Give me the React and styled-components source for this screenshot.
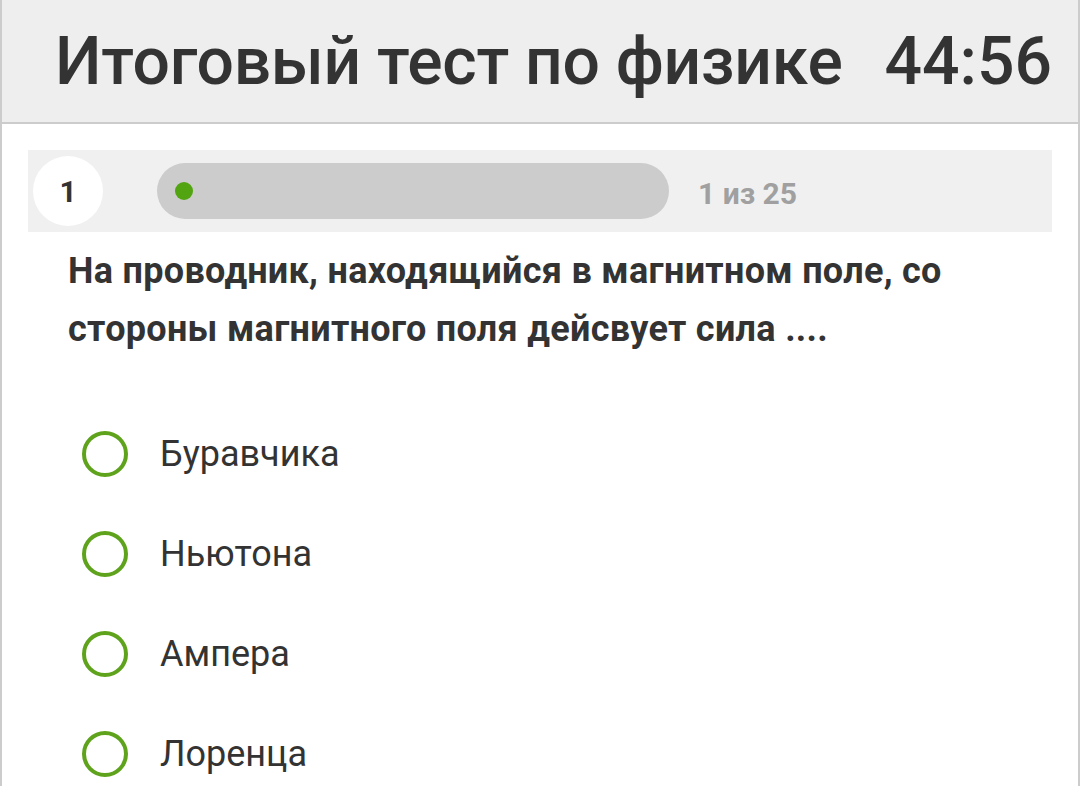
import React from "react";
import styled, { createGlobalStyle } from "styled-components";

const GlobalStyle = createGlobalStyle`
  html, body {
    margin: 0;
    padding: 0;
    background: #ffffff;
    font-family: Roboto, "Liberation Sans", sans-serif;
  }
`;

const options = ["Буравчика", "Ньютона", "Ампера", "Лоренца"];

const Page = styled.div`
  box-sizing: border-box;
  width: 1080px;
  height: 786px;
  overflow: hidden;
  border-left: 2px solid #cccccc;
  border-right: 2px solid #cccccc;
`;

const Header = styled.header`
  height: 122px;
  background: #eeeeee;
  border-bottom: 2px solid #cccccc;
  display: flex;
  align-items: center;
  justify-content: space-between;
  padding: 0 26px 0 53px;
`;

const Title = styled.h1`
  margin: 0;
  font-size: 66px;
  font-weight: 500;
  color: #333333;
  letter-spacing: -0.3px;
`;

const Timer = styled.span`
  font-size: 66px;
  font-weight: 500;
  color: #333333;
`;

const Content = styled.main`
  padding: 26px 26px 0 26px;
`;

const ProgressPanel = styled.div`
  height: 82px;
  background: #f0f0f0;
  display: flex;
  align-items: center;
  padding: 0 0 0 5px;
`;

const Number = styled.div`
  width: 70px;
  height: 70px;
  border-radius: 50%;
  background: #ffffff;
  display: flex;
  align-items: center;
  justify-content: center;
  font-size: 30px;
  font-weight: 700;
  color: #333333;
`;

const Track = styled.div`
  margin-left: 54px;
  width: 512px;
  height: 56px;
  border-radius: 28px;
  background: #cccccc;
  display: flex;
  align-items: center;
  padding-left: 18px;
  box-sizing: border-box;
`;

const Dot = styled.span`
  width: 18px;
  height: 18px;
  border-radius: 50%;
  background: #52a411;
`;

const Counter = styled.span`
  margin-left: 29px;
  margin-top: 4px;
  font-size: 30px;
  font-weight: 700;
  color: #a0a0a0;
`;

const Question = styled.p`
  margin: 10px 0 0 40px;
  font-size: 36px;
  font-weight: 700;
  line-height: 58px;
  letter-spacing: 0.3px;
  color: #333333;
`;

const OptionList = styled.ul`
  list-style: none;
  margin: 46px 0 0 0;
  padding: 0 0 0 54px;
`;

const Option = styled.li`
  height: 100px;
  display: flex;
  align-items: center;
`;

const Radio = styled.span`
  box-sizing: border-box;
  width: 46px;
  height: 46px;
  border-radius: 50%;
  border: 4px solid #5ea31b;
`;

const OptionText = styled.span`
  margin-left: 32px;
  font-size: 36px;
  color: #333333;
`;

export default function App() {
  return (
    <>
      <GlobalStyle />
      <Page>
        <Header>
          <Title>Итоговый тест по физике</Title>
          <Timer>44:56</Timer>
        </Header>
        <Content>
          <ProgressPanel>
            <Number>1</Number>
            <Track>
              <Dot />
            </Track>
            <Counter>1 из 25</Counter>
          </ProgressPanel>
          <Question>
            На проводник, находящийся в магнитном поле, со
            <br />
            стороны магнитного поля дейсвует сила ....
          </Question>
          <OptionList>
            {options.map((o) => (
              <Option key={o}>
                <Radio />
                <OptionText>{o}</OptionText>
              </Option>
            ))}
          </OptionList>
        </Content>
      </Page>
    </>
  );
}
